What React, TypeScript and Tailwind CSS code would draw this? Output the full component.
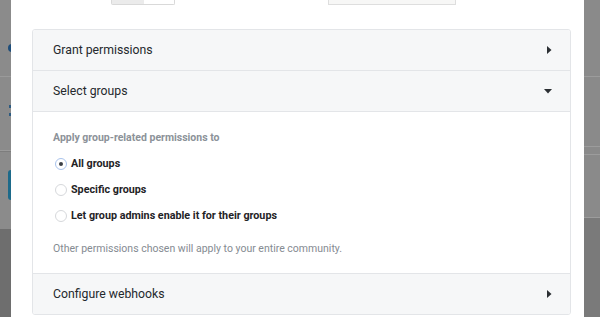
import React from 'react'

const font = { fontFamily: 'Roboto, "Liberation Sans", Arial, sans-serif' }

function Caret({ open }: { open?: boolean }) {
  return open ? (
    <svg width="8" height="5" viewBox="0 0 8 5" className="block">
      <path d="M0 0 H8 L4 4.5 Z" fill="#2b2f33" />
    </svg>
  ) : (
    <svg width="5" height="8" viewBox="0 0 5 8" className="block">
      <path d="M0 0 V8 L4.5 4 Z" fill="#2b2f33" />
    </svg>
  )
}

function Header({ title, open }: { title: string; open?: boolean }) {
  return (
    <div className="flex h-[40px] items-center justify-between bg-[#f6f7f8] pl-[20px] pr-[18px] text-[12.25px] text-[#25292d]">
      <span>{title}</span>
      <Caret open={open} />
    </div>
  )
}

function Radio({ label, checked }: { label: string; checked?: boolean }) {
  return (
    <div className="flex h-[26px] items-center gap-[4px]">
      <span
        className={
          checked
            ? 'flex h-[12px] w-[12px] items-center justify-center rounded-full border border-[#a9c3ec] bg-white'
            : 'h-[12px] w-[12px] rounded-full border border-[#d6d8db] bg-white'
        }
      >
        {checked && <span className="h-[4px] w-[4px] rounded-full bg-[#3b4046]" />}
      </span>
      <span className="text-[10.75px] font-bold text-[#1f2326]">{label}</span>
    </div>
  )
}

export default function App() {
  return (
    <div className="flex h-[317px] w-[600px] overflow-hidden bg-white" style={font}>
      {/* backdrop left */}
      <div className="flex w-[11px] flex-col bg-[#8b8b8b]">
        <div className="h-[77px] border-b border-[#9a9a9a] pt-[44px]">
          <div className="ml-[8px] h-[8px] w-[4px] rounded-l-full bg-[#1e4d7a]" />
        </div>
        <div className="h-[74px] border-b border-[#9a9a9a] pt-[28px]">
          <div className="ml-[9px] h-[3px] w-[2px] bg-[#2c5a80]" />
          <div className="ml-[9px] mt-[5px] h-[3px] w-[2px] bg-[#2c5a80]" />
        </div>
        <div className="h-[78px] border-t border-[#7d7d7d] pt-[18px]">
          <div className="ml-[8px] h-[30px] w-[3px] rounded-l-[3px] bg-[#1d6a8a]" />
        </div>
        <div className="flex-1 bg-[#6e6e6e]" />
      </div>

      {/* modal */}
      <div className="flex-1 bg-white">
        <div className="flex h-[29px] items-start">
          <div className="ml-[100px] flex h-[5px] w-[64px] rounded-b-[2px] border border-t-0 border-[#d9d9d9]">
            <div className="w-[32px] bg-[#ebebeb]" />
            <div className="flex-1 bg-white" />
          </div>
          <div className="ml-[153px] h-[5px] w-[128px] border border-t-0 border-[#dedede] bg-[#f7f7f6]" />
        </div>
        <div className="ml-[21px] w-[539px] overflow-hidden rounded-[3px] border border-[#e3e5e8]">
          <Header title="Grant permissions" />
          <div className="border-t border-[#e3e5e8]">
            <Header title="Select groups" open />
          </div>
          <div className="border-t border-[#e3e5e8] bg-white px-[20px] pt-[19px] pb-[17px]">
            <div className="text-[10.5px] leading-[14px] font-bold text-[#8c9299]">Apply group-related permissions to</div>
            <div className="mt-[6px] pl-[2px]">
              <Radio label="All groups" checked />
              <Radio label="Specific groups" />
              <Radio label="Let group admins enable it for their groups" />
            </div>
            <div className="mt-[13px] text-[10.5px] leading-[14px] text-[#858b92]">
              Other permissions chosen will apply to your entire community.
            </div>
          </div>
          <div className="border-t border-[#e3e5e8]">
            <Header title="Configure webhooks" />
          </div>
        </div>
      </div>

      {/* backdrop right */}
      <div className="flex w-[16px] flex-col bg-[#8a8a8a]">
        <div className="h-[77px] border-b border-[#9c9c9c]" />
        <div className="h-[70px] border-b border-[#9c9c9c]" />
        <div className="h-[8px] border-b border-[#9c9c9c]" />
        <div className="h-[63px] border-b border-[#9c9c9c]" />
        <div className="flex-1 bg-[#7a7a7a]" />
      </div>
    </div>
  )
}
